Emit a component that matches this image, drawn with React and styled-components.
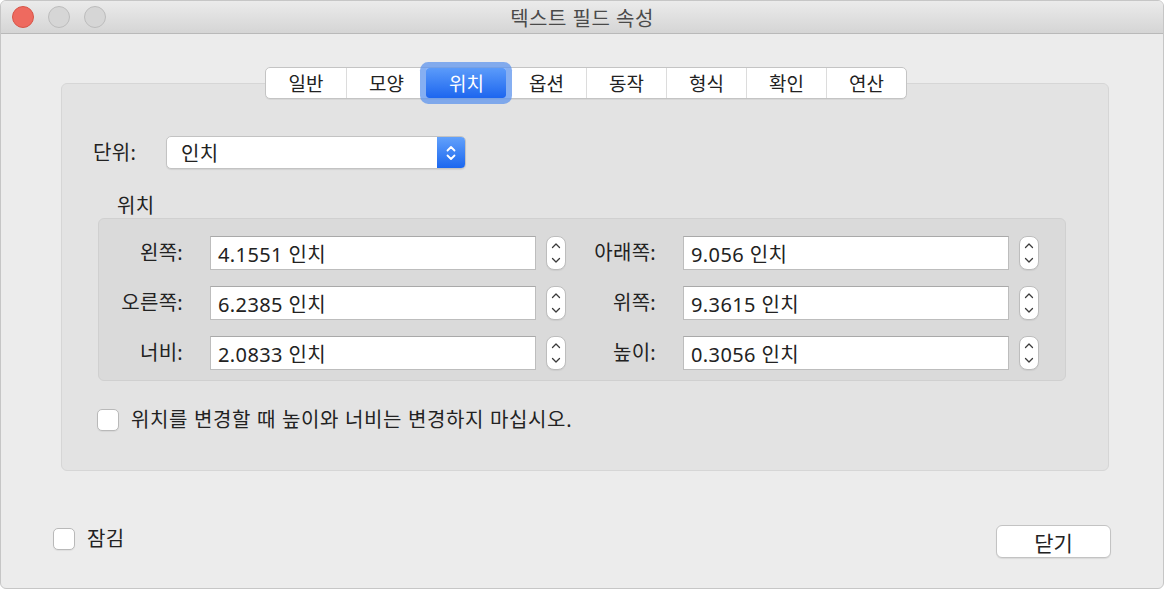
import React, { useState } from "react";
import styled, { createGlobalStyle, css } from "styled-components";

const Global = createGlobalStyle`
  html, body { margin: 0; padding: 0; background: #ffffff; }
  body { font-family: "Noto Sans", "Noto Sans CJK KR", sans-serif; color: #222; }
  * { box-sizing: border-box; }
`;

const Window = styled.div`
  width: 1164px;
  height: 589px;
  background: #ececec;
  border: 1px solid #c6c6c6;
  border-radius: 6px;
  overflow: hidden;
  display: flex;
  flex-direction: column;
  font-family: "Noto Sans", "Noto Sans CJK KR", sans-serif;
`;

const TitleBar = styled.div`
  height: 33px;
  flex: none;
  display: flex;
  align-items: center;
  position: relative;
  background: linear-gradient(#ebebeb, #d5d5d5);
  border-bottom: 1px solid #b9b9b9;
  padding-left: 11px;
`;

const Lights = styled.div`
  display: flex;
  gap: 14px;
  align-items: center;
`;

const Light = styled.span`
  width: 22px;
  height: 22px;
  border-radius: 50%;
  ${(p) =>
    p.$red
      ? css`background: #ee6a5f; border: 1px solid #d65548;`
      : css`background: #d6d6d6; border: 1px solid #bcbcbc;`}
`;

const Title = styled.div`
  position: absolute;
  left: 0;
  right: 0;
  top: 0;
  bottom: 0;
  display: flex;
  align-items: center;
  justify-content: center;
  font-size: 20px;
  letter-spacing: 0.5px;
  color: #4a4a4a;
  pointer-events: none;
`;

const Body = styled.div`
  flex: 1;
  display: flex;
  flex-direction: column;
  padding: 33px 54px 0 60px;
`;

const TabBar = styled.div`
  align-self: center;
  display: flex;
  margin-left: 2px;
  height: 32px;
  margin-bottom: -16px;
  position: relative;
  z-index: 1;
  background: #fff;
  border: 1px solid #c4c4c4;
  border-radius: 5px;
  box-shadow: 0 1px 0 rgba(0,0,0,0.05);
`;

const Tab = styled.div`
  width: 80px;
  height: 100%;
  display: flex;
  align-items: center;
  justify-content: center;
  font-size: 19px;
  color: #222;
  border-left: 1px solid #dcdcdc;
  &:first-child { border-left: none; }
  ${(p) =>
    p.$active &&
    css`
      position: relative;
      color: #fff;
      border-left-color: transparent;
      background: linear-gradient(#5b9bfa, #1d66ef);
      box-shadow: 0 0 0 6px rgba(93, 148, 238, 0.75);
      border-radius: 3px;
      z-index: 2;
      & + div { border-left-color: transparent; }
    `}
`;

const Panel = styled.div`
  background: #e3e3e3;
  border: 1px solid #d6d6d6;
  border-radius: 6px;
  padding: 52px 42px 39px 31px;
  display: flex;
  flex-direction: column;
`;

const UnitRow = styled.div`
  display: flex;
  align-items: center;
  height: 33px;
`;

const Label = styled.span`
  font-size: 20px;
  line-height: 22px;
  letter-spacing: ${(p) => (p.$wide ? "0.65px" : "0.3px")};
  color: #222;
`;

const UnitLabel = styled(Label)`
  width: 73px;
`;

const Popup = styled.div`
  width: 300px;
  height: 33px;
  display: flex;
  background: #fff;
  border: 1px solid #c3c3c3;
  border-radius: 5px;
  box-shadow: 0 1px 1px rgba(0,0,0,0.08);
  overflow: hidden;
`;

const PopupText = styled.div`
  flex: 1;
  display: flex;
  align-items: center;
  padding-left: 14px;
  font-size: 20px;
  letter-spacing: 0.3px;
  color: #222;
`;

const PopupArrow = styled.div`
  width: 28px;
  display: flex;
  align-items: center;
  justify-content: center;
  background: linear-gradient(#62a1fb, #1b67ef);
`;

const GroupTitle = styled(Label)`
  margin: 25px 0 0 24px;
  height: 24px;
  line-height: 24px;
`;

const GroupBox = styled.div`
  margin-left: 5px;
  background: #dadada;
  border: 1px solid #d0d0d0;
  border-radius: 6px;
  padding: 17px 27px 10px 10px;
  display: grid;
  grid-template-columns: 91px 326px 20px 97px 326px 20px;
  column-gap: 10px;
  row-gap: 16px;
  align-items: center;
`;

const FieldLabel = styled(Label)`
  text-align: right;
  padding-right: 17px;
  white-space: nowrap;
`;

const Field = styled.div`
  height: 34px;
  background: #fff;
  border: 1px solid #bdbdbd;
  border-top-color: #a9a9a9;
  display: flex;
  align-items: center;
  padding-left: 7px;
  font-size: 20px;
  letter-spacing: 0.4px;
  color: #222;
`;

const Stepper = styled.div`
  width: 20px;
  height: 34px;
  background: #fff;
  border: 1px solid #bdbdbd;
  border-radius: 8px;
  display: flex;
  align-items: center;
  justify-content: center;
  box-shadow: 0 1px 1px rgba(0,0,0,0.06);
`;

const CheckRow = styled.label`
  display: flex;
  align-items: center;
  gap: 12px;
  ${(p) => p.$top && css`margin-top: ${p.$top}px;`}
  ${(p) => p.$left && css`margin-left: ${p.$left}px;`}
  ${(p) => p.$lift && css`margin-bottom: ${p.$lift}px;`}
`;

const Box = styled.span`
  width: 22px;
  height: 22px;
  flex: none;
  background: #fff;
  border: 1px solid #b9b9b9;
  border-radius: 5px;
  box-shadow: 0 1px 1px rgba(0,0,0,0.06);
`;

const Footer = styled.div`
  margin: 54px -2px 0 -8px;
  display: flex;
  align-items: center;
  justify-content: space-between;
`;

const Button = styled.div`
  width: 115px;
  height: 33px;
  background: #fff;
  border: 1px solid #c3c3c3;
  border-radius: 6px;
  box-shadow: 0 1px 1px rgba(0,0,0,0.08);
  display: flex;
  align-items: center;
  justify-content: center;
  font-size: 21px;
  color: #222;
`;

const Chevrons = ({ color = "#fff", w = 10, h = 20, sw = 1.8 }) => (
  <svg width={w} height={h} viewBox="0 0 10 20" fill="none">
    <path d="M1.5 7.5 L5 4 L8.5 7.5" stroke={color} strokeWidth={sw} strokeLinecap="round" strokeLinejoin="round" />
    <path d="M1.5 12.5 L5 16 L8.5 12.5" stroke={color} strokeWidth={sw} strokeLinecap="round" strokeLinejoin="round" />
  </svg>
);

const StepChevrons = () => (
  <svg width="10" height="28" viewBox="0 0 10 28" fill="none">
    <path d="M1.5 8.5 L5 5 L8.5 8.5" stroke="#3a3a3a" strokeWidth="1.3" strokeLinecap="round" strokeLinejoin="round" />
    <path d="M1.5 19.5 L5 23 L8.5 19.5" stroke="#3a3a3a" strokeWidth="1.3" strokeLinecap="round" strokeLinejoin="round" />
  </svg>
);

const tabs = ["일반", "모양", "위치", "옵션", "동작", "형식", "확인", "연산"];

const rows = [
  ["왼쪽:", "4.1551 인치", "아래쪽:", "9.056 인치"],
  ["오른쪽:", "6.2385 인치", "위쪽:", "9.3615 인치"],
  ["너비:", "2.0833 인치", "높이:", "0.3056 인치"],
];

export default function App() {
  const [active] = useState(2);
  return (
    <>
      <Global />
      <Window>
        <TitleBar>
          <Lights>
            <Light $red />
            <Light />
            <Light />
          </Lights>
          <Title>텍스트 필드 속성</Title>
        </TitleBar>
        <Body>
          <TabBar>
            {tabs.map((t, i) => (
              <Tab key={t} $active={i === active}>{t}</Tab>
            ))}
          </TabBar>
          <Panel>
            <UnitRow>
              <UnitLabel>단위:</UnitLabel>
              <Popup>
                <PopupText>인치</PopupText>
                <PopupArrow>
                  <Chevrons />
                </PopupArrow>
              </Popup>
            </UnitRow>
            <GroupTitle>위치</GroupTitle>
            <GroupBox>
              {rows.map((r) => (
                <React.Fragment key={r[0]}>
                  <FieldLabel>{r[0]}</FieldLabel>
                  <Field>{r[1]}</Field>
                  <Stepper><StepChevrons /></Stepper>
                  <FieldLabel>{r[2]}</FieldLabel>
                  <Field>{r[3]}</Field>
                  <Stepper><StepChevrons /></Stepper>
                </React.Fragment>
              ))}
            </GroupBox>
            <CheckRow $top={28} $left={4}>
              <Box />
              <Label $wide>위치를 변경할 때 높이와 너비는 변경하지 마십시오.</Label>
            </CheckRow>
          </Panel>
          <Footer>
            <CheckRow $lift={5}>
              <Box />
              <Label>잠김</Label>
            </CheckRow>
            <Button>닫기</Button>
          </Footer>
        </Body>
      </Window>
    </>
  );
}
